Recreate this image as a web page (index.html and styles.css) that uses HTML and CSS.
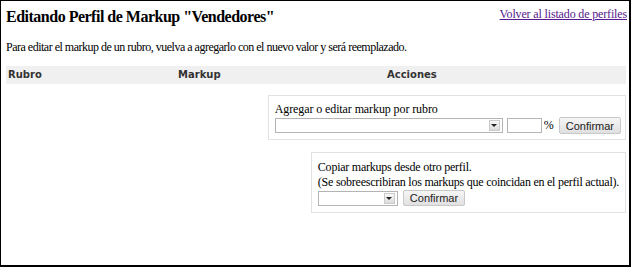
FILE: index.html
```html
<!DOCTYPE html>
<html>
<head>
<meta charset="utf-8">
<link rel="stylesheet" href="styles.css">
</head>
<body>
<div class="frame">
  <div class="top">
    <h1 class="title">Editando Perfil de Markup "Vendedores"</h1>
    <a class="back" href="#">Volver al listado de perfiles</a>
  </div>
  <p class="intro">Para editar el markup de un rubro, vuelva a agregarlo con el nuevo valor y será reemplazado.</p>
  <table class="grid">
    <thead>
      <tr><th class="c1">Rubro</th><th class="c2">Markup</th><th class="c3">Acciones</th></tr>
    </thead>
  </table>
  <div class="panels">
    <div class="box box-add">
      <div class="label">Agregar o editar markup por rubro</div>
      <div class="row">
        <span class="select sel-wide"><span class="arrow"><span class="tri"></span></span></span>
        <span class="input"></span>
        <span class="pct">%</span>
        <button class="btn">Confirmar</button>
      </div>
    </div>
    <div class="box box-copy">
      <div class="label">Copiar markups desde otro perfil.</div>
      <div class="label">(Se sobreescribiran los markups que coincidan en el perfil actual).</div>
      <div class="row">
        <span class="select sel-narrow"><span class="arrow"><span class="tri"></span></span></span>
        <button class="btn">Confirmar</button>
      </div>
    </div>
  </div>
</div>
</body>
</html>
```
FILE: styles.css
```css
html, body { margin: 0; padding: 0; background: #fff; }
.frame {
  width: 631px; height: 267px; box-sizing: border-box;
  border-style: solid; border-color: #000;
  border-width: 1px 2px 2px 1px;
  padding: 0 2px 0 5px;
  font-family: "Liberation Serif", serif;
  color: #000;
}
.top { display: flex; justify-content: space-between; align-items: flex-start; }
.title { margin: 7px 0 0 0; font-size: 16px; font-weight: bold; line-height: 18px; letter-spacing: -0.5px; }
.back { margin-top: 6px; font-size: 12px; color: #551a8b; line-height: 14px; letter-spacing: -0.15px; }
.intro { margin: 14px 0 0 0; font-size: 12px; line-height: 14px; letter-spacing: -0.5px; }
.grid { width: 620px; border-collapse: collapse; margin-top: 12px; }
.grid th {
  background: #f0f0f0; text-align: left; padding: 3px 2px;
  font-family: "DejaVu Sans", sans-serif; font-size: 10px; font-weight: bold; color: #333;
  height: 12px; line-height: 12px;
}
.c1 { width: 166px; }
.c2 { width: 205px; }
.panels { display: flex; flex-direction: column; align-items: flex-end; width: 620px; margin-top: 11px; gap: 12px; }
.box { border: 1px solid #e2e2e2; }
.box-add { padding: 6px 4px 5px 6px; }
.box-copy { padding: 7px 6px 6px 6px; }
.label { font-size: 12px; line-height: 14px; }
.box-add .label { letter-spacing: -0.1px; }
.box-copy .label { line-height: 15px; letter-spacing: -0.24px; }
.row { display: flex; align-items: center; margin-top: 1px; }
.box-copy .row { margin-top: 0; }
.select {
  display: inline-flex; justify-content: flex-end; align-items: center;
  height: 15px; box-sizing: border-box; border: 1px solid #b4b4b4; background: #fff; padding-right: 2px;
}
.sel-wide { width: 228px; }
.sel-narrow { width: 80px; margin-right: 5px; }
.arrow {
  width: 9px; height: 9px; border: 1px solid #cacaca; background: linear-gradient(#f8f8f8, #dcdcdc);
  display: flex; align-items: center; justify-content: center;
}
.tri { width: 0; height: 0; border-left: 3px solid transparent; border-right: 3px solid transparent; border-top: 3px solid #222; }
.input { width: 35px; height: 15px; box-sizing: border-box; border: 1px solid #b4b4b4; background: #fff; margin-left: 4px; }
.pct { font-size: 12px; margin-left: 2px; margin-right: 5px; }
.btn {
  font-family: "Liberation Sans", Arial, sans-serif; font-size: 11px; color: #222;
  height: 16px; padding: 0 6px; border: 1px solid #c8c8c8; border-radius: 2px;
  background: linear-gradient(#f6f6f6, #e0e0e0); line-height: 14px;
}
.box-add .btn { height: 17px; }
```
